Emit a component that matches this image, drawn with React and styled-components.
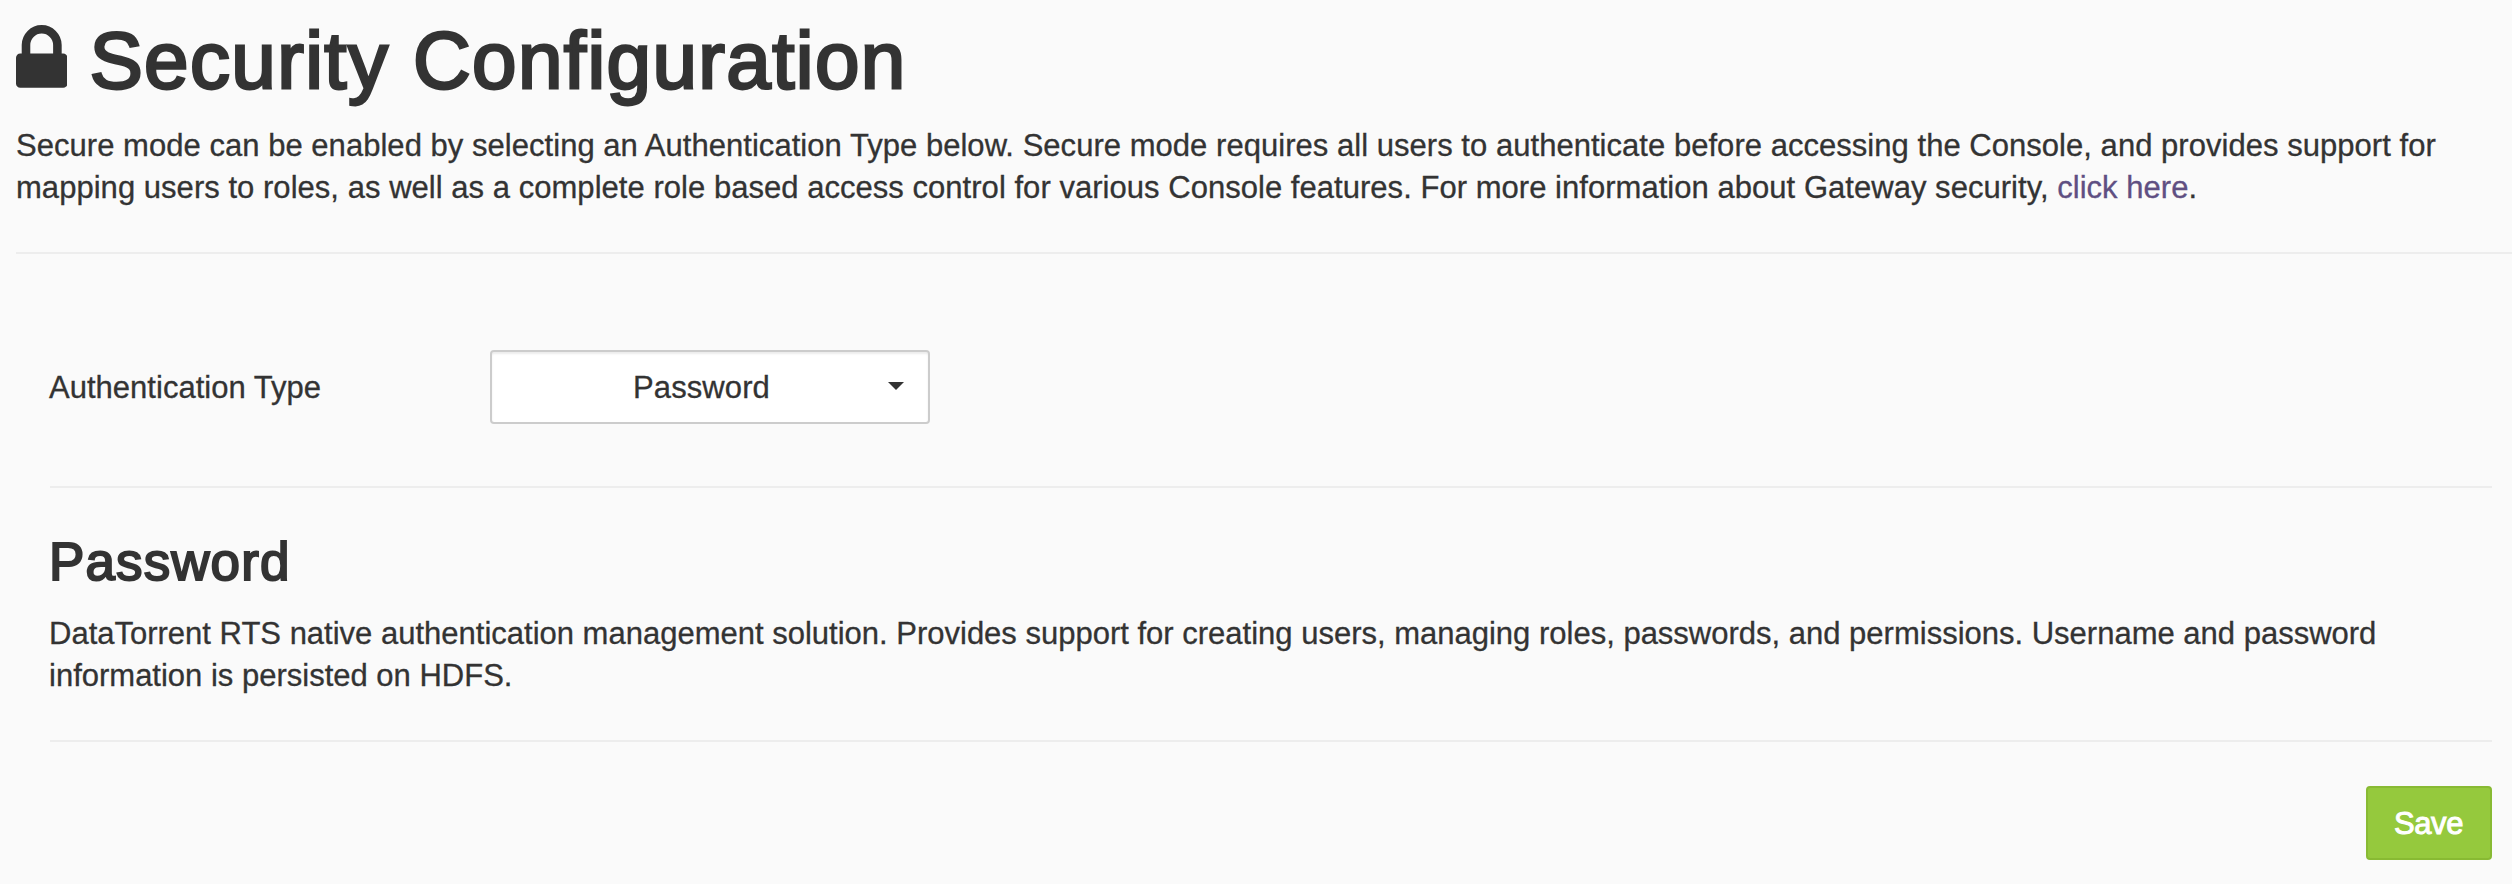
import React from "react";
import styled, { createGlobalStyle } from "styled-components";

const GlobalStyle = createGlobalStyle`
  *, *::before, *::after { box-sizing: border-box; }
  body {
    margin: 0;
    background: #fafafa;
    color: #333;
    font-family: "Liberation Sans", Arial, sans-serif;
    font-size: 31px;
    line-height: 42px;
    letter-spacing: 0.02px;
    -webkit-text-stroke: 0.3px currentColor;
  }
`;

const Page = styled.main`
  min-height: 884px;
  padding: 16px 0 24px 16px;
`;

const Title = styled.h1`
  margin: 0 0 19px;
  font-size: 80px;
  font-weight: 400;
  line-height: 90px;
  letter-spacing: 1.37px;
  white-space: nowrap;
  -webkit-text-stroke: 2.8px #333;
`;

const LockIcon = styled.svg`
  width: 51.4px;
  height: 62.9px;
  margin-right: 22px;
  fill: #333;
`;

const Paragraph = styled.p`
  margin: 0;
  letter-spacing: ${({ $tracking }) => $tracking}px;
  white-space: nowrap;
`;

const Link = styled.a`
  color: #5f4f82;
  text-decoration: none;
`;

const Divider = styled.hr`
  height: 2px;
  margin: ${({ $top }) => $top}px 0 ${({ $bottom }) => $bottom}px ${({ $indent }) => $indent || 0}px;
  border: 0;
  background: #ededed;
`;

const Settings = styled.section`
  padding: 0 20px 0 33px;
`;

const FormRow = styled.div`
  display: flex;
  align-items: center;
`;

const Label = styled.label`
  width: 441px;
  padding-top: 2px;
`;

const Select = styled.button`
  display: flex;
  align-items: center;
  width: 440px;
  height: 74px;
  padding: 0 24px 0 23px;
  border: 2px solid #ccc;
  border-radius: 4px;
  background: #fff;
  box-shadow: inset 0 2px 2px rgba(0, 0, 0, 0.075);
  color: #333;
  font: inherit;
  letter-spacing: 0.1px;
`;

const SelectValue = styled.span`
  flex: 1;
  padding-top: 2px;
  text-align: center;
`;

const Caret = styled.span`
  margin-bottom: 2px;
  border: 8px solid transparent;
  border-top-color: #333;
  border-bottom: 0;
`;

const Subtitle = styled.h2`
  margin: 0 0 21px;
  font-size: 53px;
  font-weight: 400;
  line-height: 60px;
  letter-spacing: 1.1px;
  -webkit-text-stroke: 2px #333;
`;

const Actions = styled.div`
  display: flex;
  justify-content: flex-end;
`;

const SaveButton = styled.button`
  width: 126px;
  height: 74px;
  padding: 2px 1px 0 0;
  border: 2px solid #88ba33;
  border-radius: 4px;
  background: #95c93d;
  color: #fff;
  font: inherit;
  letter-spacing: -0.4px;
  -webkit-text-stroke: 1px #fff;
`;

export default function App() {
  return (
    <>
      <GlobalStyle />
      <Page>
        <Title>
          <LockIcon viewBox="0 128 1152 1408" aria-hidden="true">
            <path d="M320 768h512v-192q0-106-75-181t-181-75t-181 75t-75 181v192zM1152 864v576q0 40-28 68t-68 28h-960q-40 0-68-28t-28-68v-576q0-40 28-68t68-28h32v-192q0-184 132-316t316-132t316 132t132 316v192h32q40 0 68 28t28 68z" />
          </LockIcon>
          Security Configuration
        </Title>
        <Paragraph $tracking={0.035}>
          Secure mode can be enabled by selecting an Authentication Type below. Secure mode requires all users to
          authenticate before accessing the Console, and provides support for
          <br />
          mapping users to roles, as well as a complete role based access control for various Console features. For
          more information about Gateway security, <Link href="#">click here</Link>.
        </Paragraph>
        <Divider $top={43} $bottom={96} />
        <Settings>
          <FormRow>
            <Label htmlFor="auth-type">Authentication Type</Label>
            <Select id="auth-type" type="button">
              <SelectValue>Password</SelectValue>
              <Caret />
            </Select>
          </FormRow>
          <Divider $top={62} $bottom={44} $indent={1} />
          <Subtitle>Password</Subtitle>
          <Paragraph $tracking={0}>
            DataTorrent RTS native authentication management solution. Provides support for creating users, managing
            roles, passwords, and permissions. Username and password
            <br />
            information is persisted on HDFS.
          </Paragraph>
          <Divider $top={43} $bottom={44} $indent={1} />
          <Actions>
            <SaveButton type="button">Save</SaveButton>
          </Actions>
        </Settings>
      </Page>
    </>
  );
}
